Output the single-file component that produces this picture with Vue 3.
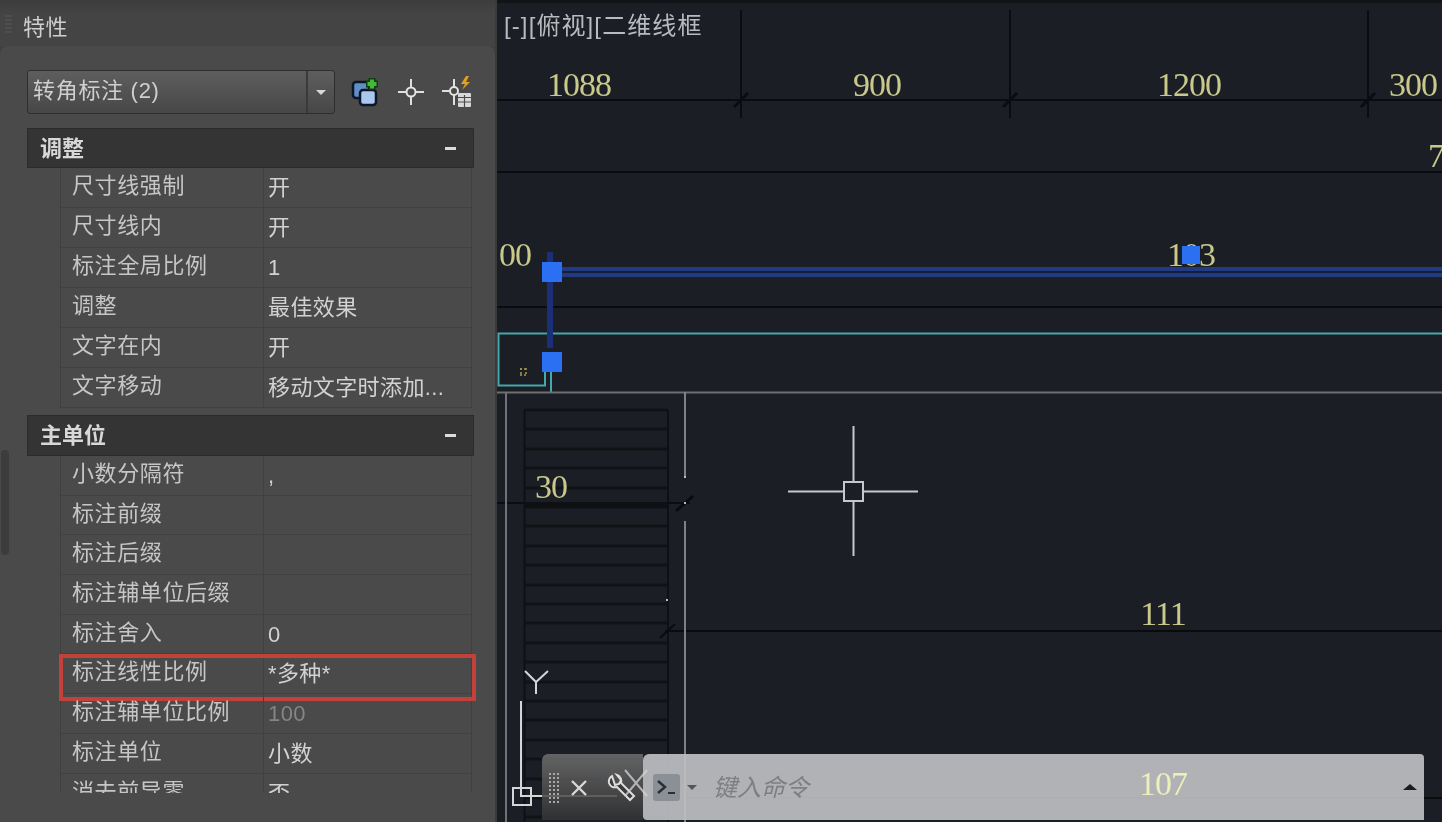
<template>
  <div class="screen">
    <!-- Panel de características -->
    <aside class="panel">
      <header class="panel-title">
        <span class="grip"></span>
        <span>特性</span>
      </header>

      <div class="panel-body">
        <span class="scrollbar"></span>

        <div class="toolbar">
          <div class="combo">
            <span class="combo-text">转角标注 (2)</span>
            <span class="combo-btn"><i class="arrow-down"></i></span>
          </div>
          <div class="tool-icons">
            <svg width="32" height="32" viewBox="0 0 32 32">
              <rect x="3" y="6" width="16" height="16" rx="3" fill="#5f8fc8" stroke="#0c1626" stroke-width="2.5" />
              <rect x="10" y="14" width="16" height="15" rx="3" fill="#a9c8ee" stroke="#0c1626" stroke-width="2.5" />
              <path d="M22 2v12M16 8h12" stroke="#0f3d12" stroke-width="7" />
              <path d="M22 3.500v9M17.500 8h9" stroke="#45b838" stroke-width="4" />
            </svg>
            <svg width="28" height="28" viewBox="0 0 28 28">
              <circle cx="14" cy="14" r="4.500" fill="none" stroke="#e4e4e4" stroke-width="2" />
              <path d="M14 1v8M14 19v8M1 14h8M19 14h8" stroke="#e0e0e0" stroke-width="2" />
            </svg>
            <svg width="34" height="34" viewBox="0 0 34 34">
              <circle cx="14" cy="16" r="4" fill="none" stroke="#e4e4e4" stroke-width="2" />
              <path d="M14 4v8M14 20v10M2 16h8" stroke="#e0e0e0" stroke-width="2" />
              <path d="M26 1l-5 8h4l-3 6 8-8h-4l3-6z" fill="#e0a020" />
              <rect x="18" y="18" width="13" height="14" rx="1" fill="#d8d8d8" />
              <path d="M18 22.500h13M18 27h13M24.500 20v12" stroke="#4a4a4a" stroke-width="1.200" />
            </svg>
          </div>
        </div>

        <section v-for="group in groups" :key="group.title" class="group" :class="group.cls">
          <h3 class="group-head">
            <span>{{ group.title }}</span>
            <i class="collapse"></i>
          </h3>
          <div class="rows">
            <div
              v-for="row in group.rows"
              :key="row.label"
              class="row"
              :class="{ marked: row.marked }"
            >
              <span class="cell-label">{{ row.label }}</span>
              <span class="cell-value" :class="{ muted: row.muted }">{{ row.value }}</span>
            </div>
          </div>
        </section>
      </div>
    </aside>

    <!-- Área de dibujo -->
    <main class="canvas">
      <svg class="drawing" width="945" height="822" viewBox="497 0 945 822">
        <rect x="497" y="0" width="945" height="822" fill="#1b1e24" />
        <rect x="497" y="0" width="945" height="3" fill="#121316" />

        <!-- cotas superiores -->
        <g stroke="#0b0c0f" stroke-width="2" fill="none">
          <path d="M497 100H1442M497 172H1442M497 307H1442" />
          <path d="M741 10V118M1010 10V118M1368 10V118" />
          <path d="M734 107L748 93M1003 107L1017 93M1361 107L1375 93" stroke-width="3" />
        </g>

        <!-- rayado -->
        <rect x="524" y="410" width="144" height="412" fill="#1b1e25" />
        <path
          v-for="y in stripes"
          :key="y"
          :d="`M524 ${y}H668`"
          stroke="#101216"
          stroke-width="3"
        />
        <path d="M524.500 410V822M668 410V822" stroke="#0e1014" stroke-width="2" />
        <path d="M497 503H690" stroke="#0c0d10" stroke-width="2" />
        <path d="M524 505H667" stroke="#0e1014" stroke-width="6" />
        <path d="M676 511L693 496" stroke="#0a0b0d" stroke-width="3" />
        <path d="M665 631H1442" stroke="#0a0b0d" stroke-width="2" />
        <path d="M660 638L675 624" stroke="#0a0b0d" stroke-width="2" />
        <path d="M685 798H1442" stroke="#0a0b0d" stroke-width="2" />

        <!-- contornos -->
        <path d="M1442 333.500H498.500V385.500H545V372M551 372V392" stroke="#45a8ac" stroke-width="2" fill="none" />
        <path d="M497 392.500H1442" stroke="#6d6e70" stroke-width="2" />
        <path d="M506 392V822" stroke="#707174" stroke-width="2" />
        <path d="M685 392V478M685 521V822" stroke="#808184" stroke-width="2" />
        <rect x="684" y="476" width="2" height="2" fill="#bbb" />
        <rect x="684" y="502" width="2" height="2" fill="#bbb" />
        <rect x="666" y="599" width="2" height="2" fill="#bbb" />

        <!-- selección azul -->
        <path d="M551 272H1442" stroke="#223a80" stroke-width="10" />
        <path d="M551 272H1442" stroke="#141d3c" stroke-width="2" />
        <path d="M550 252V348" stroke="#1a2f78" stroke-width="6" />

        <g class="dim">
          <text x="579" y="96">1088</text>
          <text x="877" y="96">900</text>
          <text x="1189" y="96">1200</text>
          <text x="1413" y="96">300</text>
          <text x="1436" y="167">7</text>
          <text x="515" y="266">00</text>
          <text x="1191" y="266">103</text>
          <text x="551" y="498">30</text>
          <text x="1163" y="625">111</text>
        </g>
        <rect x="542" y="262" width="20" height="20" fill="#2b6ff2" />
        <rect x="542" y="352" width="20" height="20" fill="#2b6ff2" />
        <rect x="1182" y="246" width="18" height="18" fill="#2b6ff2" />
        <path d="M520 369h7M520 375h7M521 368v8M526 368v8" stroke="#a89a4a" stroke-width="1.500" stroke-dasharray="2 2" fill="none" />

        <text class="view-label" x="504" y="34">[-][俯视][二维线框</text>

        <!-- cursor -->
        <g stroke="#c6c8cc" stroke-width="2" fill="none">
          <path d="M788 491.500H843M863 491.500H918M853.500 426V481M853.500 501V556" />
          <rect x="844" y="482" width="19" height="19" />
        </g>

        <!-- SCP -->
        <g stroke="#d4d5d8" stroke-width="2" fill="none">
          <path d="M525 671L536 682L548 671M536 682V694" />
          <path d="M521 701V796H617" />
          <rect x="513" y="788" width="18" height="17" />
        </g>
      </svg>

      <!-- Línea de comandos flotante -->
      <div class="cmdbar">
        <div class="cmd-tools">
          <span class="cmd-grip"></span>
          <svg width="18" height="18" viewBox="0 0 18 18">
            <path d="M2 2L16 16M16 2L2 16" stroke="#d8d8d8" stroke-width="2.400" />
          </svg>
          <svg class="wrench" width="30" height="30" viewBox="0 0 30 30">
            <path
              d="M6 3a7 7 0 0 0-3 7c1 3 4 5 8 4l13 13 4-4-13-13c1-4-1-7-4-8l4 5-2 4-4 1z"
              fill="#3a3a3a"
              stroke="#dedede"
              stroke-width="2"
            />
          </svg>
        </div>
        <div class="cmd-input">
          <span class="prompt">
            <svg width="26" height="26" viewBox="0 0 26 26">
              <path d="M4 7l7 6-7 6" fill="none" stroke="#2a2d33" stroke-width="2.400" />
              <path d="M14 19h7" stroke="#2a2d33" stroke-width="2" />
            </svg>
          </span>
          <i class="prompt-arrow"></i>
          <span class="placeholder">键入命令</span>
          <span class="cmd-dim">107</span>
          <i class="arrow-up"></i>
        </div>
        <!-- la X del SCP se ve por encima de la barra -->
        <svg class="ucs-x" width="26" height="30" viewBox="0 0 26 30">
          <path d="M2 2L24 28M24 2L2 28" stroke="#d4d5d8" stroke-width="2" opacity="0.75" />
        </svg>
      </div>
    </main>
  </div>
</template>

<script setup>
const groups = [
  {
    title: '调整',
    cls: 'first',
    rows: [
      { label: '尺寸线强制', value: '开' },
      { label: '尺寸线内', value: '开' },
      { label: '标注全局比例', value: '1' },
      { label: '调整', value: '最佳效果' },
      { label: '文字在内', value: '开' },
      { label: '文字移动', value: '移动文字时添加...' }
    ]
  },
  {
    title: '主单位',
    cls: 'second',
    rows: [
      { label: '小数分隔符', value: ',' },
      { label: '标注前缀', value: '' },
      { label: '标注后缀', value: '' },
      { label: '标注辅单位后缀', value: '' },
      { label: '标注舍入', value: '0' },
      { label: '标注线性比例', value: '*多种*', marked: true },
      { label: '标注辅单位比例', value: '100', muted: true },
      { label: '标注单位', value: '小数' },
      { label: '消去前导零', value: '否' }
    ]
  }
]

const stripes = []
for (let i = 0; i < 22; i++) {
  stripes.push(Math.round(410 + i * 19.4))
}
</script>

<style>
html,
body {
  margin: 0;
  background: #1b1e24;
  overflow: hidden;
}
</style>

<style scoped>
.screen {
  display: flex;
  width: 1442px;
  height: 822px;
  overflow: hidden;
  font-family: "Liberation Sans", "Noto Sans CJK SC", sans-serif;
  filter: blur(0.45px);
}

.panel {
  width: 497px;
  flex: none;
  display: flex;
  flex-direction: column;
  background: #414141;
  color: #c9c9c9;
  border-right: 2px solid #3a3a3a;
  box-sizing: border-box;
  overflow: hidden;
}

.panel-title {
  height: 46px;
  flex: none;
  display: flex;
  align-items: center;
  gap: 11px;
  padding: 3px 0 0 5px;
  box-sizing: border-box;
  font-size: 22px;
  letter-spacing: 0.6px;
  color: #cfcfcf;
  background: linear-gradient(#3d3d3d, #444 30%);
}

.grip {
  width: 7px;
  height: 20px;
  background: repeating-linear-gradient(#4e4e4e 0 2px, transparent 2px 4px);
}

.panel-body {
  position: relative;
  flex: 1;
  background: #4a4a4a;
  border-radius: 8px 8px 0 0;
  padding: 24px 21px 0 27px;
}

.scrollbar {
  position: absolute;
  left: 1px;
  top: 404px;
  width: 8px;
  height: 105px;
  border-radius: 4px;
  background: #3c3c3c;
}

.toolbar {
  display: flex;
  align-items: center;
  height: 44px;
  margin-bottom: 14px;
}

.combo {
  width: 308px;
  height: 44px;
  box-sizing: border-box;
  display: flex;
  border: 1px solid #2e2e2e;
  border-radius: 3px;
  background: linear-gradient(#5e5e5e, #474747);
}

.combo-text {
  flex: 1;
  padding-left: 5px;
  font-size: 22px;
  letter-spacing: 0.7px;
  line-height: 40px;
  color: #cfcfcf;
}

.combo-btn {
  width: 26px;
  display: flex;
  align-items: center;
  justify-content: center;
  border-left: 2px solid #3a3a3a;
}

.arrow-down {
  width: 0;
  height: 0;
  border: 5px solid transparent;
  border-top: 5px solid #d8d8d8;
  border-bottom: 0;
}

.tool-icons {
  flex: 1;
  display: flex;
  align-items: center;
  justify-content: space-between;
  padding-left: 15px;
}

.group-head {
  display: flex;
  align-items: center;
  justify-content: space-between;
  height: 40px;
  box-sizing: border-box;
  margin: 0;
  padding: 0 17px 5px 12px;
  background: #343434;
  border: 1px solid #2b2b2b;
  font-size: 22px;
  font-weight: 700;
  color: #d8d8d8;
}

.second .group-head {
  height: 41px;
}

.collapse {
  width: 11px;
  height: 3px;
  margin-top: 5px;
  background: #dcdcdc;
}

.first {
  margin-bottom: 7px;
}

.rows {
  margin-left: 33px;
  margin-right: 2px;
  border-left: 1px solid #404040;
  border-right: 1px solid #404040;
}

/* la última fila queda cortada, pero el marco rojo debe sobresalir */
.second .rows {
  height: 337px;
  clip-path: inset(0 -10px 0 -10px);
}

.row {
  position: relative;
  display: flex;
  height: 40px;
  box-sizing: border-box;
  border-bottom: 1px solid #414141;
  font-size: 22px;
}

.second .row {
  height: 39.7px;
}

.cell-label {
  width: 203px;
  flex: none;
  box-sizing: border-box;
  padding: 0 0 6px 11px;
  border-right: 1px solid #414141;
  line-height: 36px;
  letter-spacing: 0.6px;
  color: #c6c6c6;
  white-space: nowrap;
}

.cell-value {
  flex: 1;
  padding: 0 0 6px 4px;
  line-height: 39px;
  letter-spacing: 0.4px;
  color: #d2d2d2;
  white-space: nowrap;
  overflow: hidden;
}

.muted {
  color: #858585;
}

.marked::after {
  content: '';
  position: absolute;
  left: -2px;
  right: -5px;
  top: 0;
  bottom: -8px;
  border: 4px solid #c2423a;
}

.canvas {
  position: relative;
  flex: 1;
  min-width: 0;
}

.drawing {
  display: block;
}

.dim text {
  font-family: "Liberation Serif", serif;
  font-size: 34px;
  letter-spacing: -1px;
  fill: #c9c98c;
  text-anchor: middle;
}

.view-label {
  font-family: "Liberation Sans", "Noto Sans CJK SC", sans-serif;
  font-size: 24px;
  letter-spacing: 1.1px;
  fill: #b8babd;
}

.cmdbar {
  position: absolute;
  left: 45px;
  top: 754px;
  width: 882px;
  height: 66px;
  display: flex;
}

.cmd-tools {
  width: 101px;
  flex: none;
  display: flex;
  align-items: center;
  padding-top: 2px;
  box-sizing: border-box;
  border-radius: 6px 0 0 0;
  background: linear-gradient(rgba(112, 112, 112, 0.85), rgba(52, 52, 52, 0.85));
}

.cmd-grip {
  width: 11px;
  height: 32px;
  margin: 0 11px 0 6px;
  background:
    radial-gradient(circle, #a8a8a8 1px, transparent 1.5px) 0 0 / 4px 4px;
}

.wrench {
  margin-left: 18px;
}

.cmd-input {
  flex: 1;
  display: flex;
  align-items: center;
  padding: 0 6px 0 10px;
  border-radius: 6px 4px 0 4px;
  background: rgba(190, 191, 194, 0.92);
}

.prompt {
  width: 27px;
  height: 27px;
  display: flex;
  align-items: center;
  justify-content: center;
  border-radius: 3px;
  background: #8b9096;
}

.prompt-arrow {
  width: 0;
  height: 0;
  margin: 0 16px 0 7px;
  border: 5px solid transparent;
  border-top: 5px solid #555;
  border-bottom: 0;
}

.placeholder {
  width: 97px;
  margin-bottom: 4px;
  font-size: 24px;
  font-style: italic;
  color: #7d7f82;
  white-space: nowrap;
}

.cmd-dim {
  margin-left: 329px;
  margin-bottom: 6px;
  font-family: "Liberation Serif", serif;
  font-size: 34px;
  letter-spacing: -1px;
  color: #eeeebc;
}

.arrow-up {
  margin-left: auto;
  margin-right: 1px;
  width: 0;
  height: 0;
  border: 7px solid transparent;
  border-bottom: 6px solid #1c1c1c;
  border-top: 0;
}

.ucs-x {
  position: absolute;
  left: 81px;
  top: 14px;
}
</style>
